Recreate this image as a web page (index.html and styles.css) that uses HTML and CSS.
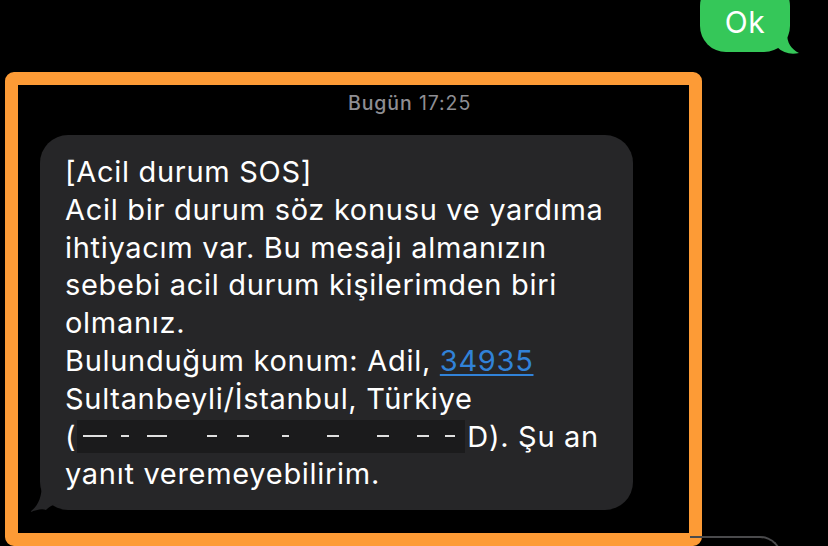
FILE: index.html
```html
<!DOCTYPE html>
<html lang="tr">
<head>
<meta charset="utf-8">
<link rel="stylesheet" href="styles.css">
</head>
<body>
<div class="screen">
  <div class="row-out">
    <div class="bubble-out">
      <span class="ok">Ok</span>
      <svg class="tail-out" width="22" height="22" viewBox="0 0 22 22"><path d="M0 0 L10 0 C10 10 14 16 22 20 C14 22 6 20 0 14 Z" fill="#35c759"/></svg>
    </div>
  </div>
  <div class="frame">
    <div class="stamp"><span class="day">Bugün</span> 17:25</div>
    <div class="bubble-in">
      <svg class="tail-in" width="30" height="30" viewBox="0 0 30 30"><path d="M12 0 L30 0 L30 22 C22 22 18 26 16 28 C12 26 6 28 0 30 C8 24 12 16 12 0 Z" fill="#262628"/></svg>
      <p class="msg">[Acil durum SOS]<br>Acil bir durum söz konusu ve yardıma<br>ihtiyacım var. Bu mesajı almanızın<br>sebebi acil durum kişilerimden biri<br>olmanız.<br>Bulunduğum konum: Adil, <a class="link" href="#">34935</a><br>Sultanbeyli/İstanbul, Türkiye<br>(<span class="redact"></span>D). Şu an<br>yanıt veremeyebilirim.</p>
    </div>
  </div>
  <div class="field"></div>
</div>
</body>
</html>
```
FILE: styles.css
```css
html, body {
  margin: 0;
  padding: 0;
  background: #000;
}
.screen {
  position: relative;
  width: 828px;
  height: 546px;
  overflow: hidden;
  background: #000;
  font-family: Inter, "Noto Sans", sans-serif;
}
.row-out {
  display: flex;
  justify-content: flex-end;
  padding-right: 38px;
  height: 72px;
}
.bubble-out {
  position: relative;
  width: 90px;
  height: 72px;
  margin-top: -20px;
  background: #35c759;
  border-radius: 26px;
  display: flex;
  align-items: flex-end;
  justify-content: center;
  box-sizing: border-box;
  padding-bottom: 13px;
  align-self: flex-start;
}
.ok {
  color: #fff;
  font-size: 30px;
  line-height: 34px;
  font-weight: 400;
  letter-spacing: 0.5px;
}
.tail-out {
  position: absolute;
  right: -9px;
  bottom: -3px;
}
.frame {
  margin-left: 5px;
  width: 697px;
  height: 474px;
  box-sizing: border-box;
  border: 13px solid #fd9b36;
  border-radius: 9px;
  padding: 0 0 0 22px;
  display: flex;
  flex-direction: column;
}
.stamp {
  color: #8e8e93;
  font-size: 19.5px;
  line-height: 22px;
  margin-top: 7px;
  margin-left: 308px;
  letter-spacing: 0.9px;
}
.day {
  font-weight: 500;
}
.bubble-in {
  position: relative;
  margin-top: 21px;
  width: 593px;
  height: 375px;
  box-sizing: border-box;
  background: #262628;
  border-radius: 28px;
  padding: 18px 0 0 25px;
}
.tail-in {
  position: absolute;
  left: -10px;
  bottom: -2px;
}
.msg {
  margin: 0;
  color: #fff;
  font-size: 29px;
  line-height: 37.8px;
  white-space: nowrap;
  letter-spacing: 0.7px;
}
.link {
  color: #3182d8;
  text-decoration: underline;
  text-decoration-thickness: 2px;
  text-underline-offset: 3px;
}
.redact {
  display: inline-block;
  vertical-align: middle;
  width: 388px;
  height: 33px;
  margin: -4px 2px 0 1px;
  background:
    linear-gradient(90deg, transparent 0 6px, #e0e0e0 6px 30px, transparent 30px 44px, #e0e0e0 44px 52px, transparent 52px 70px, #e0e0e0 70px 90px, transparent 90px 130px, #e0e0e0 130px 140px, transparent 140px 160px, #e0e0e0 160px 172px, transparent 172px 205px, #e0e0e0 205px 212px, transparent 212px 250px, #e0e0e0 250px 262px, transparent 262px 300px, #e0e0e0 300px 312px, transparent 312px 340px, #e0e0e0 340px 352px, transparent 352px 368px, #e0e0e0 368px 378px, transparent 378px) 0 15px / 100% 2px no-repeat,
    #1b1b1c;
}
.field {
  position: absolute;
  left: 690px;
  top: 536px;
  width: 90px;
  height: 40px;
  border-top: 2px solid #4a4a4c;
  border-right: 2px solid #4a4a4c;
  border-radius: 0 22px 0 0;
}
```
